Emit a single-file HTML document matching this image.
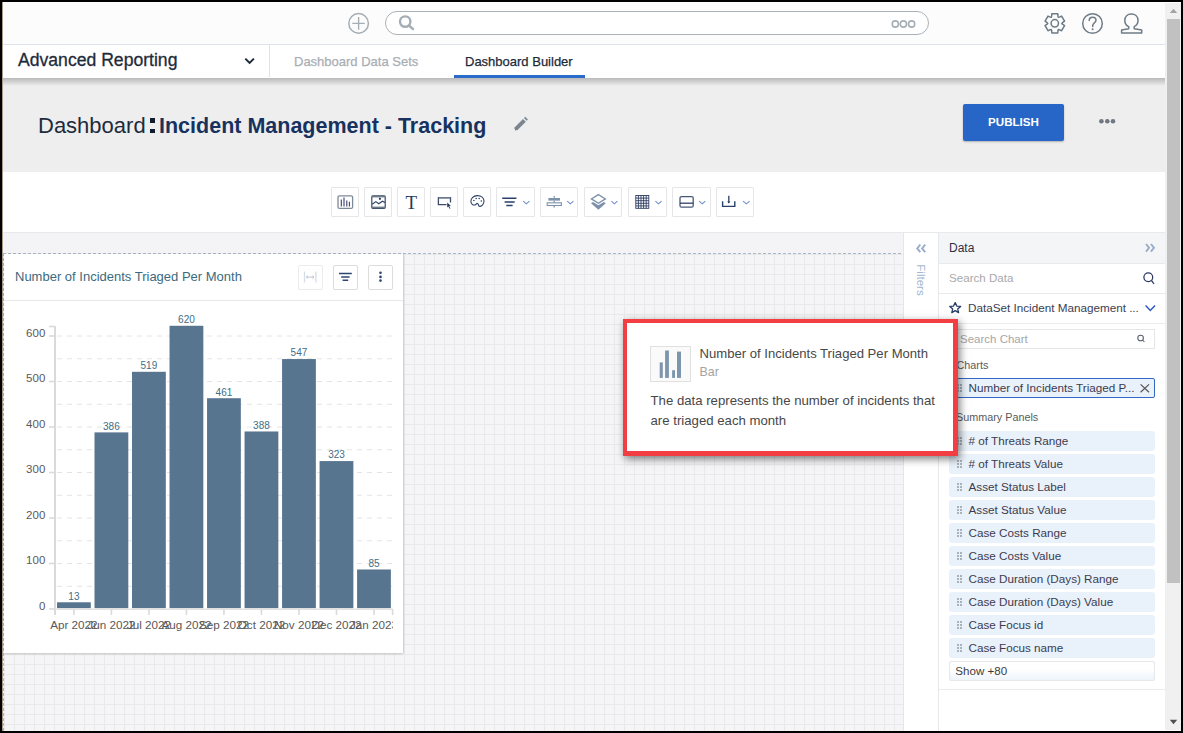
<!DOCTYPE html>
<html><head><meta charset="utf-8">
<style>
*{box-sizing:border-box;margin:0;padding:0}
html,body{width:1183px;height:733px;overflow:hidden;background:#000}
body{position:relative;font-family:"Liberation Sans",sans-serif}
.a{position:absolute}
#page{position:absolute;left:2px;top:2px;width:1179px;height:729px;background:#fff;overflow:hidden}
#edge{position:absolute;left:2px;top:2px;width:1px;height:729px;background:#a89a86}
/* bands */
#topbar{left:3px;top:2px;width:1162px;height:42px;background:#fcfcfc}
#topline{left:3px;top:44px;width:1162px;height:1px;background:#dde3e8}
#nav{left:3px;top:45px;width:1162px;height:33px;background:#fff}
#navshadow{left:3px;top:78px;width:1162px;height:8px;background:linear-gradient(#b9b9b9,#eeeeee)}
#titleband{left:3px;top:78px;width:1162px;height:94px;background:#eeeeee}
#toolband{left:3px;top:172px;width:1162px;height:60px;background:#fff}
#toolline{left:3px;top:232px;width:1162px;height:1px;background:#e9e9ec}
#canvas{left:3px;top:233px;width:901px;height:498px;background:#f4f4f7}
#grid{left:3px;top:254px;width:901px;height:477px;
 background-color:#f5f5f8;
 background-image:linear-gradient(90deg,#e9e9ea 1px,transparent 1px),linear-gradient(#e9e9ea 1px,transparent 1px);
 background-size:10px 10px;background-position:1px 0px}
#dashtop{left:3px;top:253px;width:901px;height:1px;background-image:linear-gradient(90deg,#a9b8c8 3px,transparent 3px);background-size:5px 1px}
#dashleft{left:3px;top:253px;width:1px;height:478px;background-image:linear-gradient(#a9b8c8 3px,transparent 3px);background-size:1px 5px}
/* scrollbar */
#sb{left:1165px;top:3px;width:16px;height:727px;background:#f0f0f0}
#sbthumb{left:1167px;top:19px;width:13px;height:564px;background:#c1c1c1}
</style></head>
<body>
<div id="page"></div>
<div id="edge"></div>
<div class="a" id="topbar"></div>
<div class="a" id="topline"></div>
<div class="a" id="titleband"></div>
<div class="a" id="nav"></div>
<div class="a" id="navshadow"></div>
<div class="a" id="toolband"></div>
<div class="a" id="toolline"></div>
<div class="a" id="canvas"></div>
<div class="a" id="grid"></div>
<div class="a" id="dashtop"></div>
<div class="a" id="dashleft"></div>

<!-- TOP BAR ICONS -->
<svg class="a" style="left:340px;top:5px" width="40" height="40" viewBox="340 5 40 40">
 <circle cx="358.6" cy="23.4" r="9.8" fill="none" stroke="#a6aeb5" stroke-width="1.5"/>
 <path d="M352.3 23.4H364.8M358.6 17.1V29.7" stroke="#a6aeb5" stroke-width="1.4"/>
</svg>
<div class="a" style="left:385px;top:11px;width:544px;height:24px;border:1px solid #abb2b8;border-radius:12px;background:#fff"></div>
<svg class="a" style="left:395px;top:10px" width="25" height="25" viewBox="395 10 25 25">
 <circle cx="405.2" cy="21.6" r="5.2" fill="none" stroke="#a6aeb5" stroke-width="2.4"/>
 <path d="M409 25.5L413 29.2" stroke="#a6aeb5" stroke-width="2.4" stroke-linecap="round"/>
</svg>
<svg class="a" style="left:885px;top:14px" width="36" height="20" viewBox="885 14 36 20">
 <circle cx="895.3" cy="24" r="3.1" fill="none" stroke="#a6aeb5" stroke-width="1.6"/>
 <circle cx="903.4" cy="24" r="3.1" fill="none" stroke="#a6aeb5" stroke-width="1.6"/>
 <circle cx="911.6" cy="24" r="3.1" fill="none" stroke="#a6aeb5" stroke-width="1.6"/>
</svg>
<svg class="a" style="left:1040px;top:8px" width="110" height="32" viewBox="1040 8 110 32">
 <g fill="none" stroke="#6d7b87" stroke-width="1.5" stroke-linejoin="round">
  <path id="gear" d="M1051.59 16.40L1051.84 13.85L1057.76 13.85L1058.01 16.40L1058.30 17.34L1059.26 17.12L1061.60 16.06L1064.55 21.18L1062.47 22.68L1061.80 23.40L1062.47 24.12L1064.55 25.62L1061.60 30.74L1059.26 29.68L1058.30 29.46L1058.01 30.40L1057.76 32.95L1051.84 32.95L1051.59 30.40L1051.30 29.46L1050.34 29.68L1048.00 30.74L1045.05 25.62L1047.13 24.12L1047.80 23.40L1047.13 22.68L1045.05 21.18L1048.00 16.06L1050.34 17.12L1051.30 17.34Z"/>
  <circle cx="1054.8" cy="23.3" r="3.7"/>
  <circle cx="1092.5" cy="23.5" r="9.8"/>
  <path d="M1089.2 20.6C1089.2 18.4 1090.7 17.2 1092.6 17.2C1094.6 17.2 1096 18.5 1096 20.3C1096 22.4 1093.2 22.9 1092.7 25.4V26.4" stroke-linecap="round"/>
  <path d="M1124.8 20.4C1124.8 16.4 1127.5 14 1131.4 14C1135.3 14 1138 16.4 1138 20.4C1138 23.4 1136.3 25.5 1134.2 26.6V28.8L1141.7 30V33H1121.6V30L1128.7 28.8V26.6C1126.5 25.5 1124.8 23.4 1124.8 20.4Z"/>
 </g>
 <circle cx="1092.6" cy="29.2" r="1" fill="#6d7b87"/>
</svg>

<!-- NAV -->
<div class="a" style="left:18px;top:49px;font-size:17.6px;line-height:22px;-webkit-text-stroke:0.3px #1e2b3a;color:#1e2b3a;white-space:nowrap">Advanced Reporting</div>
<svg class="a" style="left:240px;top:55px" width="20" height="12" viewBox="240 55 20 12"><path d="M245.3 58.6L249.6 62.9L253.9 58.6" fill="none" stroke="#1e2b3a" stroke-width="2"/></svg>
<div class="a" style="left:269px;top:45px;width:1px;height:32px;background:#dde3e8"></div>
<div class="a" style="left:294px;top:54px;font-size:13px;line-height:16px;-webkit-text-stroke:0.25px #a9aeb4;color:#a9aeb4;white-space:nowrap">Dashboard Data Sets</div>
<div class="a" style="left:465px;top:54px;font-size:13px;line-height:16px;-webkit-text-stroke:0.25px #1c2a38;color:#1c2a38;white-space:nowrap">Dashboard Builder</div>
<div class="a" style="left:454px;top:75px;width:131px;height:3px;background:#2a6bc9"></div>
<!-- TITLE -->
<div class="a" style="left:38px;top:113px;font-size:22px;line-height:26px;color:#1d2b3c;white-space:nowrap">Dashboard</div>
<div class="a" style="left:150px;top:118px;width:4.5px;height:4.5px;background:#0f1d2e"></div>
<div class="a" style="left:150px;top:128.5px;width:4.5px;height:4.5px;background:#0f1d2e"></div>
<div class="a" style="left:159px;top:113px;font-size:21.5px;line-height:26px;font-weight:bold;color:#17325e;white-space:nowrap">Incident Management - Tracking</div>
<svg class="a" style="left:512px;top:115px" width="18" height="18" viewBox="512 115 18 18"><path d="M514.5 128.2L515.2 130.6L517.6 130L525.8 121.8L523 119L514.8 127.2Z" fill="#7b858f"/><path d="M524 118L525.2 116.8L527.9 119.6L526.7 120.8Z" fill="#7b858f"/></svg>
<div class="a" style="left:963px;top:104px;width:101px;height:37px;background:#2766c6;border-radius:2px;box-shadow:0 1px 2px rgba(0,0,0,.25)"></div>
<div class="a" style="left:963px;top:115px;width:101px;text-align:center;font-size:11.6px;line-height:14px;font-weight:bold;color:#fff">PUBLISH</div>
<svg class="a" style="left:1095px;top:114px" width="24" height="14" viewBox="1095 114 24 14"><circle cx="1101.4" cy="121.3" r="2.3" fill="#6f7781"/><circle cx="1107.3" cy="121.3" r="2.3" fill="#6f7781"/><circle cx="1113" cy="121.3" r="2.3" fill="#6f7781"/></svg>
<!-- TOOLBAR -->
<div class="a" style="left:331px;top:187px;width:28px;height:30px;border:1px solid #e6e6e8;border-radius:1px;background:#fff"></div>
<div class="a" style="left:364px;top:187px;width:28px;height:30px;border:1px solid #e6e6e8;border-radius:1px;background:#fff"></div>
<div class="a" style="left:397px;top:187px;width:28px;height:30px;border:1px solid #e6e6e8;border-radius:1px;background:#fff"></div>
<div class="a" style="left:430px;top:187px;width:28px;height:30px;border:1px solid #e6e6e8;border-radius:1px;background:#fff"></div>
<div class="a" style="left:463px;top:187px;width:28px;height:30px;border:1px solid #e6e6e8;border-radius:1px;background:#fff"></div>
<div class="a" style="left:496px;top:187px;width:39px;height:30px;border:1px solid #e6e6e8;border-radius:1px;background:#fff"></div>
<div class="a" style="left:540px;top:187px;width:38px;height:30px;border:1px solid #e6e6e8;border-radius:1px;background:#fff"></div>
<div class="a" style="left:584px;top:187px;width:38px;height:30px;border:1px solid #e6e6e8;border-radius:1px;background:#fff"></div>
<div class="a" style="left:628px;top:187px;width:39px;height:30px;border:1px solid #e6e6e8;border-radius:1px;background:#fff"></div>
<div class="a" style="left:672px;top:187px;width:39px;height:30px;border:1px solid #e6e6e8;border-radius:1px;background:#fff"></div>
<div class="a" style="left:716px;top:187px;width:38px;height:30px;border:1px solid #e6e6e8;border-radius:1px;background:#fff"></div>
<svg class="a" style="left:325px;top:180px" width="440" height="42" viewBox="325 180 440 42">
<g fill="none" stroke-linecap="butt">
 <!-- chart box -->
 <rect x="338" y="195.8" width="14.6" height="12.6" rx="1.5" stroke="#7d8a99" stroke-width="1.3"/>
 <path d="M341.3 199.5V206.5M344 197.6V206.5M346.8 200.6V206.5M349.4 201.8V206.5" stroke="#3a3f6e" stroke-width="1.1"/>
 <!-- image -->
 <rect x="371.8" y="195.9" width="13.4" height="12.4" rx="1" stroke="#3b4a6a" stroke-width="1.2"/>
 <path d="M371.8 196.6H385.2" stroke="#6d7a8a" stroke-width="1.6"/>
 <path d="M371.8 207.4H385.2" stroke="#6d7a8a" stroke-width="1.6"/>
 <path d="M372.2 204.2L375.8 201.6L378.8 203.8L382.4 201.2L385 202.6" stroke="#2f3f66" stroke-width="1.1"/>
 <!-- cursor rect -->
 <path d="M446.5 204.6H438.4V197.6H450.5V202.6" stroke="#3c4a6c" stroke-width="1.3"/>
 <path d="M438.4 197.8H450.5" stroke="#6d7a8a" stroke-width="1.6"/>
 <!-- palette -->
 <path d="M477.3 195.6C473.5 195.6 470.9 198.3 470.9 201.2C470.9 204.1 473.1 205.4 474.8 205C476.3 204.7 476.2 203.3 477.4 203.4C478.6 203.5 478.1 205.6 479.2 206.3C481.9 206.8 484 204 484 201C484 197.9 481.3 195.6 477.3 195.6Z" stroke="#263b60" stroke-width="1.05"/>
 <!-- filter -->
 <path d="M502.2 198.3H516.4M504.6 201.9H514.7M506.3 205.6H512.6" stroke="#28406a" stroke-width="1.5"/>
 <!-- align -->
 <rect x="547.2" y="202.8" width="14.2" height="2.7" stroke="#7d91ab" stroke-width="1.1"/>
 <path d="M554.2 196V197.8M554.2 200.8V202.6M554.2 205.6V207.6" stroke="#7d91ab" stroke-width="1.3"/>
 <!-- layers -->
 <path d="M598.4 194.6L605.4 198.9L598.4 203.2L591.4 198.9Z" stroke="#7d91ab" stroke-width="1.3"/>
 <!-- row layout -->
 <rect x="680" y="196.6" width="13.2" height="10.6" rx="1.5" stroke="#4a5878" stroke-width="1.3"/>
 <path d="M680 203.2H693.2" stroke="#2f4066" stroke-width="1.3"/>
 <!-- download -->
 <path d="M722.6 201.2V206.4H734.8V201.2" stroke="#28406a" stroke-width="1.4"/>
 <path d="M728.8 195.7V202.5" stroke="#28406a" stroke-width="1.3"/>
 <!-- chevrons -->
 <path d="M523.2 201.1L526.3 203.9L529.4 201.1M567.2 201.1L570.3 203.9L573.4 201.1M611.4 201.1L614.4 203.9L617.4 201.1M655.4 201.1L658.5 203.9L661.6 201.1M699.1 201.1L702.2 203.9L705.3 201.1M743 201.1L746.3 203.9L749.6 201.1" stroke="#6f8bcb" stroke-width="1.05"/>
</g>
<g fill="#263b60">
 <path d="M447.2 202.4L450.8 205.8L449.2 206L450.5 208.4L449.6 208.8L448.4 206.5L447.2 207.6Z"/>
 <circle cx="379.9" cy="198.8" r="1.1"/>
 <circle cx="473.9" cy="200.6" r="0.75"/><circle cx="476.2" cy="198.4" r="0.75"/><circle cx="479.2" cy="198.6" r="0.75"/><circle cx="481.3" cy="200.9" r="0.75"/>
 <path d="M727.2 201.4L728.8 203.6L730.4 201.4Z"/>
</g>
<g fill="#7d91ab">
 <rect x="548.4" y="198" width="11.6" height="2.6"/>
 <path d="M591 203.2L593 202L598.4 205.3L603.8 202L605.8 203.2L598.4 209.8Z"/>
</g>
<g stroke="#2e3c62" stroke-width="0.9" fill="none">
 <rect x="635.8" y="195.5" width="13" height="12.8"/>
 <path d="M635.8 198.1H648.8M635.8 200.7H648.8M635.8 203.3H648.8M635.8 205.9H648.8M638.4 195.5V208.3M641 195.5V208.3M643.6 195.5V208.3M646.2 195.5V208.3"/>
</g>
</svg>
<div class="a" style="left:405.5px;top:192.5px;font-family:'Liberation Serif',serif;font-size:19px;line-height:20px;color:#263b60">T</div>
<!-- CHART PANEL -->
<div class="a" style="left:4px;top:254px;width:399px;height:399px;background:#fff;box-shadow:0 1px 2px rgba(0,0,0,.18),1px 0 1px rgba(0,0,0,.08)"></div>
<div class="a" style="left:4px;top:300px;width:399px;height:1px;background:#e8e8e8"></div>
<div class="a" style="left:15px;top:269px;font-size:13px;line-height:16px;color:#3c6a80;white-space:nowrap">Number of Incidents Triaged Per Month</div>
<div class="a" style="left:298px;top:265px;width:25px;height:25px;border:1px solid #ececec;border-radius:2px"></div>
<div class="a" style="left:333px;top:265px;width:25px;height:25px;border:1px solid #dcdcdc;border-radius:2px"></div>
<div class="a" style="left:368px;top:265px;width:25px;height:25px;border:1px solid #dcdcdc;border-radius:2px"></div>
<svg class="a" style="left:298px;top:265px" width="96" height="26" viewBox="298 265 96 26">
 <path d="M304.5 271.6V282.6M315.9 271.6V282.6" stroke="#d5dde6" stroke-width="1.3"/>
 <path d="M306.5 277.1H313.9M307.8 275.9L306.4 277.1L307.8 278.3M312.6 275.9L314 277.1L312.6 278.3" stroke="#a9b7c6" stroke-width="0.8" fill="none"/>
 <path d="M339 273.6H351.8M341.2 277.1H349.6M342.6 280.3H348.2" stroke="#2b4570" stroke-width="1.5"/>
 <circle cx="380.5" cy="272.8" r="1.3" fill="#2b4570"/><circle cx="380.5" cy="276.9" r="1.3" fill="#2b4570"/><circle cx="380.5" cy="280.6" r="1.3" fill="#2b4570"/>
</svg>
<svg class="a" style="left:4px;top:300px" width="399" height="353" viewBox="4 300 399 353">
<defs><clipPath id="xc"><rect x="4" y="600" width="389" height="50"/></clipPath></defs>
<path d="M56 586.25H393" stroke="#e4e4e4" stroke-width="1" stroke-dasharray="5 5" stroke-dashoffset="-1"/>
<path d="M56 563.50H393" stroke="#e4e4e4" stroke-width="1" stroke-dasharray="5 5" stroke-dashoffset="-1"/>
<path d="M56 540.75H393" stroke="#e4e4e4" stroke-width="1" stroke-dasharray="5 5" stroke-dashoffset="-1"/>
<path d="M56 518.00H393" stroke="#e4e4e4" stroke-width="1" stroke-dasharray="5 5" stroke-dashoffset="-1"/>
<path d="M56 495.25H393" stroke="#e4e4e4" stroke-width="1" stroke-dasharray="5 5" stroke-dashoffset="-1"/>
<path d="M56 472.50H393" stroke="#e4e4e4" stroke-width="1" stroke-dasharray="5 5" stroke-dashoffset="-1"/>
<path d="M56 449.75H393" stroke="#e4e4e4" stroke-width="1" stroke-dasharray="5 5" stroke-dashoffset="-1"/>
<path d="M56 427.00H393" stroke="#e4e4e4" stroke-width="1" stroke-dasharray="5 5" stroke-dashoffset="-1"/>
<path d="M56 404.25H393" stroke="#e4e4e4" stroke-width="1" stroke-dasharray="5 5" stroke-dashoffset="-1"/>
<path d="M56 381.50H393" stroke="#e4e4e4" stroke-width="1" stroke-dasharray="5 5" stroke-dashoffset="-1"/>
<path d="M56 358.75H393" stroke="#e4e4e4" stroke-width="1" stroke-dasharray="5 5" stroke-dashoffset="-1"/>
<path d="M56 336.00H393" stroke="#e4e4e4" stroke-width="1" stroke-dasharray="5 5" stroke-dashoffset="-1"/>
<rect x="57.00" y="602.28" width="33.8" height="5.92" fill="#587590"/>
<text x="73.90" y="599.68" text-anchor="middle" font-size="10" fill="#3f6e86">13</text>
<rect x="94.51" y="432.38" width="33.8" height="175.82" fill="#587590"/>
<text x="111.41" y="429.78" text-anchor="middle" font-size="10" fill="#3f6e86">386</text>
<rect x="132.02" y="371.80" width="33.8" height="236.40" fill="#587590"/>
<text x="148.92" y="369.20" text-anchor="middle" font-size="10" fill="#3f6e86">519</text>
<rect x="169.53" y="325.79" width="33.8" height="282.41" fill="#587590"/>
<text x="186.43" y="323.19" text-anchor="middle" font-size="10" fill="#3f6e86">620</text>
<rect x="207.04" y="398.21" width="33.8" height="209.99" fill="#587590"/>
<text x="223.94" y="395.61" text-anchor="middle" font-size="10" fill="#3f6e86">461</text>
<rect x="244.55" y="431.47" width="33.8" height="176.73" fill="#587590"/>
<text x="261.45" y="428.87" text-anchor="middle" font-size="10" fill="#3f6e86">388</text>
<rect x="282.06" y="359.04" width="33.8" height="249.16" fill="#587590"/>
<text x="298.96" y="356.44" text-anchor="middle" font-size="10" fill="#3f6e86">547</text>
<rect x="319.57" y="461.07" width="33.8" height="147.13" fill="#587590"/>
<text x="336.47" y="458.47" text-anchor="middle" font-size="10" fill="#3f6e86">323</text>
<rect x="357.08" y="569.48" width="33.8" height="38.72" fill="#587590"/>
<text x="373.98" y="566.88" text-anchor="middle" font-size="10" fill="#3f6e86">85</text>
<path d="M55 326V615" stroke="#dadada" stroke-width="2"/>
<path d="M49 326.5H55" stroke="#dadada" stroke-width="1.6"/>
<path d="M54 609.3H393" stroke="#e2e2e2" stroke-width="1.6"/>
<path d="M49 609.00H55" stroke="#dadada" stroke-width="1.6"/>
<text x="45.3" y="609.90" text-anchor="end" font-size="11.5" fill="#5a5a5a">0</text>
<path d="M49 563.50H55" stroke="#dadada" stroke-width="1.6"/>
<text x="45.3" y="564.40" text-anchor="end" font-size="11.5" fill="#5a5a5a">100</text>
<path d="M49 518.00H55" stroke="#dadada" stroke-width="1.6"/>
<text x="45.3" y="518.90" text-anchor="end" font-size="11.5" fill="#5a5a5a">200</text>
<path d="M49 472.50H55" stroke="#dadada" stroke-width="1.6"/>
<text x="45.3" y="473.40" text-anchor="end" font-size="11.5" fill="#5a5a5a">300</text>
<path d="M49 427.00H55" stroke="#dadada" stroke-width="1.6"/>
<text x="45.3" y="427.90" text-anchor="end" font-size="11.5" fill="#5a5a5a">400</text>
<path d="M49 381.50H55" stroke="#dadada" stroke-width="1.6"/>
<text x="45.3" y="382.40" text-anchor="end" font-size="11.5" fill="#5a5a5a">500</text>
<path d="M49 336.00H55" stroke="#dadada" stroke-width="1.6"/>
<text x="45.3" y="336.90" text-anchor="end" font-size="11.5" fill="#5a5a5a">600</text>
<path d="M73.90 609.5V615" stroke="#dadada" stroke-width="1.6"/>
<path d="M111.41 609.5V615" stroke="#dadada" stroke-width="1.6"/>
<path d="M148.92 609.5V615" stroke="#dadada" stroke-width="1.6"/>
<path d="M186.43 609.5V615" stroke="#dadada" stroke-width="1.6"/>
<path d="M223.94 609.5V615" stroke="#dadada" stroke-width="1.6"/>
<path d="M261.45 609.5V615" stroke="#dadada" stroke-width="1.6"/>
<path d="M298.96 609.5V615" stroke="#dadada" stroke-width="1.6"/>
<path d="M336.47 609.5V615" stroke="#dadada" stroke-width="1.6"/>
<path d="M373.98 609.5V615" stroke="#dadada" stroke-width="1.6"/>
<path d="M392.60 609.5V615" stroke="#dadada" stroke-width="1.6"/>
<g clip-path="url(#xc)">
<text x="73.90" y="628.6" text-anchor="middle" font-size="11.7" fill="#595959">Apr 2022</text>
<text x="111.41" y="628.6" text-anchor="middle" font-size="11.7" fill="#595959">Jun 2022</text>
<text x="148.92" y="628.6" text-anchor="middle" font-size="11.7" fill="#595959">Jul 2022</text>
<text x="186.43" y="628.6" text-anchor="middle" font-size="11.7" fill="#595959">Aug 2022</text>
<text x="223.94" y="628.6" text-anchor="middle" font-size="11.7" fill="#595959">Sep 2022</text>
<text x="261.45" y="628.6" text-anchor="middle" font-size="11.7" fill="#595959">Oct 2022</text>
<text x="298.96" y="628.6" text-anchor="middle" font-size="11.7" fill="#595959">Nov 2022</text>
<text x="336.47" y="628.6" text-anchor="middle" font-size="11.7" fill="#595959">Dec 2022</text>
<text x="373.98" y="628.6" text-anchor="middle" font-size="11.7" fill="#595959">Jan 2023</text>
</g></svg>
<!-- RIGHT PANEL -->
<div class="a" style="left:903px;top:233px;width:1px;height:498px;background:#e4e6ea"></div>
<div class="a" style="left:904px;top:233px;width:261px;height:498px;background:#fff"></div>
<div class="a" style="left:938px;top:233px;width:1px;height:498px;background:#e6e8eb"></div>
<div class="a" style="left:939px;top:233px;width:226px;height:30px;background:#f4f5f7"></div>
<div class="a" style="left:939px;top:263px;width:226px;height:1px;background:#e8eaec"></div>
<div class="a" style="left:939px;top:293px;width:226px;height:1px;background:#eaeaea"></div>
<div class="a" style="left:939px;top:323px;width:226px;height:1px;background:#ececec"></div>
<div class="a" style="left:939px;top:689px;width:226px;height:1px;background:#ececec"></div>
<div class="a" style="left:949px;top:241px;font-size:12px;line-height:14px;color:#2f3045">Data</div>
<div class="a" style="left:949px;top:271px;font-size:11.6px;line-height:14px;color:#a9a9a9">Search Data</div>
<div class="a" style="left:968px;top:301px;font-size:11.7px;line-height:14px;color:#3b3e52;white-space:nowrap">DataSet Incident Management ...</div>
<div class="a" style="left:949px;top:329px;width:206px;height:20px;border:1px solid #e6e6e6;background:#fff"></div>
<div class="a" style="left:960px;top:332px;font-size:11.5px;line-height:14px;color:#a6a6a6">Search Chart</div>
<div class="a" style="left:956.5px;top:359px;font-size:10.8px;line-height:13px;color:#5a5a5a">Charts</div>
<div class="a" style="left:949px;top:378px;width:206px;height:20px;border:1px solid #3567c6;border-radius:2px;background:#e9f1fa"></div>
<div class="a" style="left:968.5px;top:381px;font-size:11.7px;line-height:14px;color:#3c3c50;white-space:nowrap">Number of Incidents Triaged P...</div>
<div class="a" style="left:956px;top:411px;font-size:10.8px;line-height:13px;color:#5a5a5a">Summary Panels</div>
<div class="a" style="left:949px;top:661px;width:206px;height:20px;border:1px solid #e6e8ea;border-radius:2px;background:linear-gradient(#fff 40%,#eef4fb)"></div>
<div class="a" style="left:955.3px;top:664px;font-size:11.6px;line-height:14px;color:#3c3c3c">Show +80</div>
<div class="a" style="left:914px;top:264px;width:14px;height:32px;overflow:visible">
 <div style="position:absolute;left:-9px;top:9px;width:32px;height:14px;transform:rotate(90deg);font-size:11.5px;line-height:14px;color:#a3b7cf;text-align:center">Filters</div>
</div>
<svg class="a" style="left:904px;top:233px" width="261" height="170" viewBox="904 233 261 170">
 <g fill="none" stroke="#98adc9" stroke-width="1.9">
  <path d="M920.3 244.6L917.2 248.4L920.3 252.2M925.2 244.6L922.1 248.4L925.2 252.2"/>
  <path d="M1146 244L1149.1 247.8L1146 251.6M1150.9 244L1154 247.8L1150.9 251.6"/>
 </g>
 <circle cx="1148.3" cy="277.3" r="4.4" fill="none" stroke="#2d3a66" stroke-width="1.3"/>
 <path d="M1151.4 280.4L1154 283.9" stroke="#2d3a66" stroke-width="1.3"/>
 <path d="M955.2 302.6L956.8 306.1L960.6 306.4L957.7 308.9L958.6 312.6L955.2 310.6L951.8 312.6L952.7 308.9L949.8 306.4L953.6 306.1Z" fill="none" stroke="#253a66" stroke-width="1.3" stroke-linejoin="round"/>
 <path d="M1145.6 305.6L1150.3 310.4L1155 305.6" fill="none" stroke="#2d5ac0" stroke-width="1.5"/>
 <circle cx="1140.6" cy="338" r="2.8" fill="none" stroke="#5a6070" stroke-width="1.1"/>
 <path d="M1142.6 340L1144.4 342" stroke="#5a6070" stroke-width="1.1"/>
 <path d="M1140.6 384.4L1149 392.2M1149 384.4L1140.6 392.2" stroke="#555" stroke-width="1.2"/>
</svg>
<div class="a" style="left:949px;top:431px;width:206px;height:20px;border-radius:3px;background:#e9f1fa"></div>
<div class="a" style="left:968.5px;top:434px;font-size:11.7px;line-height:14px;color:#3c3c50;white-space:nowrap"># of Threats Range</div>
<div class="a" style="left:956.9px;top:437.4px;width:1.7px;height:1.7px;background:#a9b2bb"></div>
<div class="a" style="left:956.9px;top:440.4px;width:1.7px;height:1.7px;background:#a9b2bb"></div>
<div class="a" style="left:956.9px;top:443.4px;width:1.7px;height:1.7px;background:#a9b2bb"></div>
<div class="a" style="left:960.4px;top:437.4px;width:1.7px;height:1.7px;background:#a9b2bb"></div>
<div class="a" style="left:960.4px;top:440.4px;width:1.7px;height:1.7px;background:#a9b2bb"></div>
<div class="a" style="left:960.4px;top:443.4px;width:1.7px;height:1.7px;background:#a9b2bb"></div>
<div class="a" style="left:949px;top:454px;width:206px;height:20px;border-radius:3px;background:#e9f1fa"></div>
<div class="a" style="left:968.5px;top:457px;font-size:11.7px;line-height:14px;color:#3c3c50;white-space:nowrap"># of Threats Value</div>
<div class="a" style="left:956.9px;top:460.4px;width:1.7px;height:1.7px;background:#a9b2bb"></div>
<div class="a" style="left:956.9px;top:463.4px;width:1.7px;height:1.7px;background:#a9b2bb"></div>
<div class="a" style="left:956.9px;top:466.4px;width:1.7px;height:1.7px;background:#a9b2bb"></div>
<div class="a" style="left:960.4px;top:460.4px;width:1.7px;height:1.7px;background:#a9b2bb"></div>
<div class="a" style="left:960.4px;top:463.4px;width:1.7px;height:1.7px;background:#a9b2bb"></div>
<div class="a" style="left:960.4px;top:466.4px;width:1.7px;height:1.7px;background:#a9b2bb"></div>
<div class="a" style="left:949px;top:477px;width:206px;height:20px;border-radius:3px;background:#e9f1fa"></div>
<div class="a" style="left:968.5px;top:480px;font-size:11.7px;line-height:14px;color:#3c3c50;white-space:nowrap">Asset Status Label</div>
<div class="a" style="left:956.9px;top:483.4px;width:1.7px;height:1.7px;background:#a9b2bb"></div>
<div class="a" style="left:956.9px;top:486.4px;width:1.7px;height:1.7px;background:#a9b2bb"></div>
<div class="a" style="left:956.9px;top:489.4px;width:1.7px;height:1.7px;background:#a9b2bb"></div>
<div class="a" style="left:960.4px;top:483.4px;width:1.7px;height:1.7px;background:#a9b2bb"></div>
<div class="a" style="left:960.4px;top:486.4px;width:1.7px;height:1.7px;background:#a9b2bb"></div>
<div class="a" style="left:960.4px;top:489.4px;width:1.7px;height:1.7px;background:#a9b2bb"></div>
<div class="a" style="left:949px;top:500px;width:206px;height:20px;border-radius:3px;background:#e9f1fa"></div>
<div class="a" style="left:968.5px;top:503px;font-size:11.7px;line-height:14px;color:#3c3c50;white-space:nowrap">Asset Status Value</div>
<div class="a" style="left:956.9px;top:506.4px;width:1.7px;height:1.7px;background:#a9b2bb"></div>
<div class="a" style="left:956.9px;top:509.4px;width:1.7px;height:1.7px;background:#a9b2bb"></div>
<div class="a" style="left:956.9px;top:512.4px;width:1.7px;height:1.7px;background:#a9b2bb"></div>
<div class="a" style="left:960.4px;top:506.4px;width:1.7px;height:1.7px;background:#a9b2bb"></div>
<div class="a" style="left:960.4px;top:509.4px;width:1.7px;height:1.7px;background:#a9b2bb"></div>
<div class="a" style="left:960.4px;top:512.4px;width:1.7px;height:1.7px;background:#a9b2bb"></div>
<div class="a" style="left:949px;top:523px;width:206px;height:20px;border-radius:3px;background:#e9f1fa"></div>
<div class="a" style="left:968.5px;top:526px;font-size:11.7px;line-height:14px;color:#3c3c50;white-space:nowrap">Case Costs Range</div>
<div class="a" style="left:956.9px;top:529.4px;width:1.7px;height:1.7px;background:#a9b2bb"></div>
<div class="a" style="left:956.9px;top:532.4px;width:1.7px;height:1.7px;background:#a9b2bb"></div>
<div class="a" style="left:956.9px;top:535.4px;width:1.7px;height:1.7px;background:#a9b2bb"></div>
<div class="a" style="left:960.4px;top:529.4px;width:1.7px;height:1.7px;background:#a9b2bb"></div>
<div class="a" style="left:960.4px;top:532.4px;width:1.7px;height:1.7px;background:#a9b2bb"></div>
<div class="a" style="left:960.4px;top:535.4px;width:1.7px;height:1.7px;background:#a9b2bb"></div>
<div class="a" style="left:949px;top:546px;width:206px;height:20px;border-radius:3px;background:#e9f1fa"></div>
<div class="a" style="left:968.5px;top:549px;font-size:11.7px;line-height:14px;color:#3c3c50;white-space:nowrap">Case Costs Value</div>
<div class="a" style="left:956.9px;top:552.4px;width:1.7px;height:1.7px;background:#a9b2bb"></div>
<div class="a" style="left:956.9px;top:555.4px;width:1.7px;height:1.7px;background:#a9b2bb"></div>
<div class="a" style="left:956.9px;top:558.4px;width:1.7px;height:1.7px;background:#a9b2bb"></div>
<div class="a" style="left:960.4px;top:552.4px;width:1.7px;height:1.7px;background:#a9b2bb"></div>
<div class="a" style="left:960.4px;top:555.4px;width:1.7px;height:1.7px;background:#a9b2bb"></div>
<div class="a" style="left:960.4px;top:558.4px;width:1.7px;height:1.7px;background:#a9b2bb"></div>
<div class="a" style="left:949px;top:569px;width:206px;height:20px;border-radius:3px;background:#e9f1fa"></div>
<div class="a" style="left:968.5px;top:572px;font-size:11.7px;line-height:14px;color:#3c3c50;white-space:nowrap">Case Duration (Days) Range</div>
<div class="a" style="left:956.9px;top:575.4px;width:1.7px;height:1.7px;background:#a9b2bb"></div>
<div class="a" style="left:956.9px;top:578.4px;width:1.7px;height:1.7px;background:#a9b2bb"></div>
<div class="a" style="left:956.9px;top:581.4px;width:1.7px;height:1.7px;background:#a9b2bb"></div>
<div class="a" style="left:960.4px;top:575.4px;width:1.7px;height:1.7px;background:#a9b2bb"></div>
<div class="a" style="left:960.4px;top:578.4px;width:1.7px;height:1.7px;background:#a9b2bb"></div>
<div class="a" style="left:960.4px;top:581.4px;width:1.7px;height:1.7px;background:#a9b2bb"></div>
<div class="a" style="left:949px;top:592px;width:206px;height:20px;border-radius:3px;background:#e9f1fa"></div>
<div class="a" style="left:968.5px;top:595px;font-size:11.7px;line-height:14px;color:#3c3c50;white-space:nowrap">Case Duration (Days) Value</div>
<div class="a" style="left:956.9px;top:598.4px;width:1.7px;height:1.7px;background:#a9b2bb"></div>
<div class="a" style="left:956.9px;top:601.4px;width:1.7px;height:1.7px;background:#a9b2bb"></div>
<div class="a" style="left:956.9px;top:604.4px;width:1.7px;height:1.7px;background:#a9b2bb"></div>
<div class="a" style="left:960.4px;top:598.4px;width:1.7px;height:1.7px;background:#a9b2bb"></div>
<div class="a" style="left:960.4px;top:601.4px;width:1.7px;height:1.7px;background:#a9b2bb"></div>
<div class="a" style="left:960.4px;top:604.4px;width:1.7px;height:1.7px;background:#a9b2bb"></div>
<div class="a" style="left:949px;top:615px;width:206px;height:20px;border-radius:3px;background:#e9f1fa"></div>
<div class="a" style="left:968.5px;top:618px;font-size:11.7px;line-height:14px;color:#3c3c50;white-space:nowrap">Case Focus id</div>
<div class="a" style="left:956.9px;top:621.4px;width:1.7px;height:1.7px;background:#a9b2bb"></div>
<div class="a" style="left:956.9px;top:624.4px;width:1.7px;height:1.7px;background:#a9b2bb"></div>
<div class="a" style="left:956.9px;top:627.4px;width:1.7px;height:1.7px;background:#a9b2bb"></div>
<div class="a" style="left:960.4px;top:621.4px;width:1.7px;height:1.7px;background:#a9b2bb"></div>
<div class="a" style="left:960.4px;top:624.4px;width:1.7px;height:1.7px;background:#a9b2bb"></div>
<div class="a" style="left:960.4px;top:627.4px;width:1.7px;height:1.7px;background:#a9b2bb"></div>
<div class="a" style="left:949px;top:638px;width:206px;height:20px;border-radius:3px;background:#e9f1fa"></div>
<div class="a" style="left:968.5px;top:641px;font-size:11.7px;line-height:14px;color:#3c3c50;white-space:nowrap">Case Focus name</div>
<div class="a" style="left:956.9px;top:644.4px;width:1.7px;height:1.7px;background:#a9b2bb"></div>
<div class="a" style="left:956.9px;top:647.4px;width:1.7px;height:1.7px;background:#a9b2bb"></div>
<div class="a" style="left:956.9px;top:650.4px;width:1.7px;height:1.7px;background:#a9b2bb"></div>
<div class="a" style="left:960.4px;top:644.4px;width:1.7px;height:1.7px;background:#a9b2bb"></div>
<div class="a" style="left:960.4px;top:647.4px;width:1.7px;height:1.7px;background:#a9b2bb"></div>
<div class="a" style="left:960.4px;top:650.4px;width:1.7px;height:1.7px;background:#a9b2bb"></div>
<div class="a" style="left:956.9px;top:384.4px;width:1.7px;height:1.7px;background:#a9b2bb"></div>
<div class="a" style="left:956.9px;top:387.4px;width:1.7px;height:1.7px;background:#a9b2bb"></div>
<div class="a" style="left:956.9px;top:390.4px;width:1.7px;height:1.7px;background:#a9b2bb"></div>
<div class="a" style="left:960.4px;top:384.4px;width:1.7px;height:1.7px;background:#a9b2bb"></div>
<div class="a" style="left:960.4px;top:387.4px;width:1.7px;height:1.7px;background:#a9b2bb"></div>
<div class="a" style="left:960.4px;top:390.4px;width:1.7px;height:1.7px;background:#a9b2bb"></div>
<!-- POPUP -->
<div class="a" style="left:623px;top:319px;width:335px;height:137px;border:4px solid #f23d42;border-right-width:5px;border-bottom-width:5px;background:#fff;box-shadow:2px 3px 8px rgba(0,0,0,.5)"></div>
<div class="a" style="left:650px;top:346px;width:41px;height:36px;border:1px solid #e0e0e0;background:#fafafa"></div>
<svg class="a" style="left:650px;top:346px" width="41" height="36" viewBox="650 346 41 36">
 <g fill="#7d95ad"><rect x="659.7" y="362.4" width="3.1" height="15.5"/><rect x="665.1" y="350.5" width="3.8" height="27.4"/><rect x="672.1" y="370.2" width="2.9" height="7.7"/><rect x="677" y="351.6" width="4" height="26.3"/></g>
</svg>
<div class="a" style="left:699.5px;top:346px;font-size:13.1px;line-height:15px;color:#474747;white-space:nowrap">Number of Incidents Triaged Per Month</div>
<div class="a" style="left:699.5px;top:365px;font-size:12.4px;line-height:15px;color:#a3a3a3">Bar</div>
<div class="a" style="left:650.5px;top:391px;font-size:13.2px;line-height:20px;color:#474747;white-space:nowrap">The data represents the number of incidents that<br>are triaged each month</div>
<div class="a" id="sb"></div>
<div class="a" id="sbthumb"></div>
<svg class="a" style="left:1165px;top:3px" width="16" height="727" viewBox="1165 3 16 727">
 <path d="M1169.8 13.1L1173.5 8.7L1177.2 13.1Z" fill="#a3a3a3"/>
 <path d="M1169.8 719.8L1173.5 724.2L1177.2 719.8Z" fill="#505050"/>
</svg>

</body></html>
